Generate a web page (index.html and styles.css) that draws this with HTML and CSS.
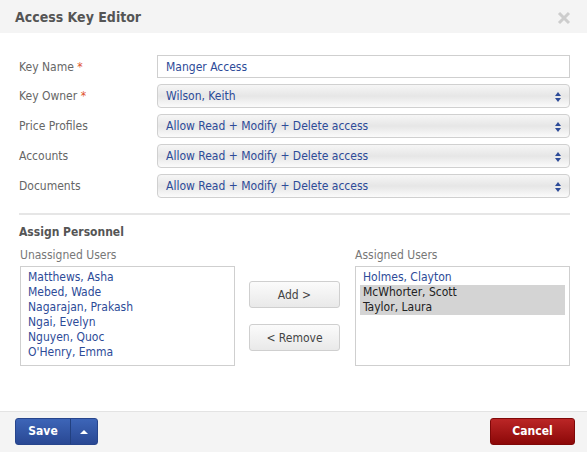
FILE: index.html
```html
<!DOCTYPE html>
<html lang="en">
<head>
    <meta charset="UTF-8">
    <title>Access Key Editor</title>
    <link rel="stylesheet" href="styles.css">
</head>
<body>
<div class="dialog">
    <div class="head">
        <h1>Access Key Editor</h1>
        <svg class="close" width="14" height="14" viewBox="0 0 14 14"><path d="M2 2L12 12M12 2L2 12" stroke="#cdcdcd" stroke-width="3"/></svg>
    </div>
    <div class="body">
        <div class="form">
            <div class="row">
                <label>Key Name <b>*</b></label>
                <div class="input">Manger Access</div>
            </div>
            <div class="row">
                <label>Key Owner <b>*</b></label>
                <div class="select">Wilson, Keith<svg viewBox="0 0 6 10"><path d="M3 0L6 4H0Z M3 10L6 6H0Z" fill="#2d4b98"/></svg></div>
            </div>
            <div class="row">
                <label>Price Profiles</label>
                <div class="select">Allow Read + Modify + Delete access<svg viewBox="0 0 6 10"><path d="M3 0L6 4H0Z M3 10L6 6H0Z" fill="#2d4b98"/></svg></div>
            </div>
            <div class="row">
                <label>Accounts</label>
                <div class="select">Allow Read + Modify + Delete access<svg viewBox="0 0 6 10"><path d="M3 0L6 4H0Z M3 10L6 6H0Z" fill="#2d4b98"/></svg></div>
            </div>
            <div class="row">
                <label>Documents</label>
                <div class="select">Allow Read + Modify + Delete access<svg viewBox="0 0 6 10"><path d="M3 0L6 4H0Z M3 10L6 6H0Z" fill="#2d4b98"/></svg></div>
            </div>
        </div>
        <h2>Assign Personnel</h2>
        <div class="assign">
            <div class="col">
                <div class="cap">Unassigned Users</div>
                <ul class="list">
                    <li>Matthews, Asha</li>
                    <li>Mebed, Wade</li>
                    <li>Nagarajan, Prakash</li>
                    <li>Ngai, Evelyn</li>
                    <li>Nguyen, Quoc</li>
                    <li>O'Henry, Emma</li>
                </ul>
            </div>
            <div class="moves">
                <button class="btn">Add &gt;</button>
                <button class="btn">&lt; Remove</button>
            </div>
            <div class="col">
                <div class="cap">Assigned Users</div>
                <ul class="list">
                    <li>Holmes, Clayton</li>
                    <li class="sel">McWhorter, Scott</li>
                    <li class="sel">Taylor, Laura</li>
                </ul>
            </div>
        </div>
    </div>
    <div class="foot">
        <div class="save"><span class="save-main">Save</span><span class="save-drop"><i></i></span></div>
        <div class="cancel">Cancel</div>
    </div>
</div>
</body>
</html>
```
FILE: styles.css
```css
* {
    margin: 0;
    padding: 0;
    box-sizing: border-box;
}

ul, li {
    list-style: none;
}

body {
    width: 587px;
    height: 452px;
    font-family: "DejaVu Sans Condensed", "DejaVu Sans", sans-serif;
    font-size: 12px;
    color: #555;
    background: #fff;
    overflow: hidden;
}

.dialog {
    height: 452px;
    display: flex;
    flex-direction: column;
}

.head {
    height: 33px;
    background: #f4f4f4;
    display: flex;
    align-items: center;
    justify-content: space-between;
    padding: 0 16px 0 15px;
}

.head h1 {
    font-size: 14px;
    font-weight: bold;
    color: #555;
    padding-top: 1px;
}

.close {
    margin-top: 2px;
}

.body {
    flex: 1;
    padding: 21px 17px 0 19px;
}

.form {
    display: flex;
    flex-direction: column;
    gap: 6px;
    padding-top: 1px;
    padding-bottom: 15px;
    border-bottom: 2px solid #e6e6e6;
}

.row {
    display: flex;
    align-items: center;
}

.row label {
    width: 138px;
    color: #666;
}

.row label b {
    color: #e0522a;
    font-weight: normal;
}

.input {
    flex: 1;
    height: 23px;
    border: 1px solid #cfcfcf;
    padding: 0 8px;
    line-height: 22px;
    color: #2d4b98;
}

.select {
    flex: 1;
    height: 24px;
    border: 1px solid #d0d0d0;
    border-radius: 4px;
    background: linear-gradient(#f6f6f6, #e6e6e6 50%, #fbfbfb);
    padding: 0 8px;
    line-height: 23px;
    color: #2d4b98;
    position: relative;
}

.select svg {
    position: absolute;
    right: 8px;
    top: 7px;
    width: 6px;
    height: 10px;
}

h2 {
    font-size: 12px;
    font-weight: bold;
    color: #555;
    margin-top: 10px;
}

.assign {
    display: flex;
    align-items: flex-start;
    margin-top: 9px;
}

.cap {
    color: #777;
    margin-bottom: 4px;
}

.col {
    width: 215px;
}

.col:first-child {
    margin-left: 1px;
}

.list {
    height: 100px;
    border: 1px solid #cfcfcf;
    padding: 3px 4px;
}

.list li {
    line-height: 15px;
    color: #2d4b98;
    padding-left: 3px;
}

.list li.sel {
    background: #d4d4d4;
    color: #222;
}

.moves {
    display: flex;
    flex-direction: column;
    gap: 16px;
    margin: 33px 15px 0 14px;
}

.btn {
    width: 91px;
    height: 27px;
    border: 1px solid #cfcfcf;
    border-radius: 3px;
    background: linear-gradient(#fbfbfb, #e9e9e9);
    font-family: inherit;
    font-size: 12px;
    color: #444;
}

.foot {
    height: 41px;
    border-top: 1px solid #e3e3e3;
    background: #f4f4f4;
    display: flex;
    align-items: flex-start;
    justify-content: space-between;
    padding: 6px 12px 0 15px;
}

.save {
    display: flex;
    height: 27px;
    border-radius: 3px;
    background: linear-gradient(#3d65b8, #294893);
    border: 1px solid #27458c;
    color: #fff;
    font-weight: bold;
}

.save-main {
    width: 55px;
    text-align: center;
    line-height: 25px;
    border-right: 1px solid #22407f;
}

.save-drop {
    width: 26px;
    display: flex;
    align-items: center;
    justify-content: center;
}

.save-drop i {
    width: 0;
    height: 0;
    border-left: 4px solid transparent;
    border-right: 4px solid transparent;
    border-bottom: 4px solid #fff;
}

.cancel {
    width: 85px;
    height: 27px;
    line-height: 25px;
    text-align: center;
    border-radius: 3px;
    background: linear-gradient(#bb2626, #8c0808);
    border: 1px solid #7f0808;
    color: #fff;
    font-weight: bold;
}
```
